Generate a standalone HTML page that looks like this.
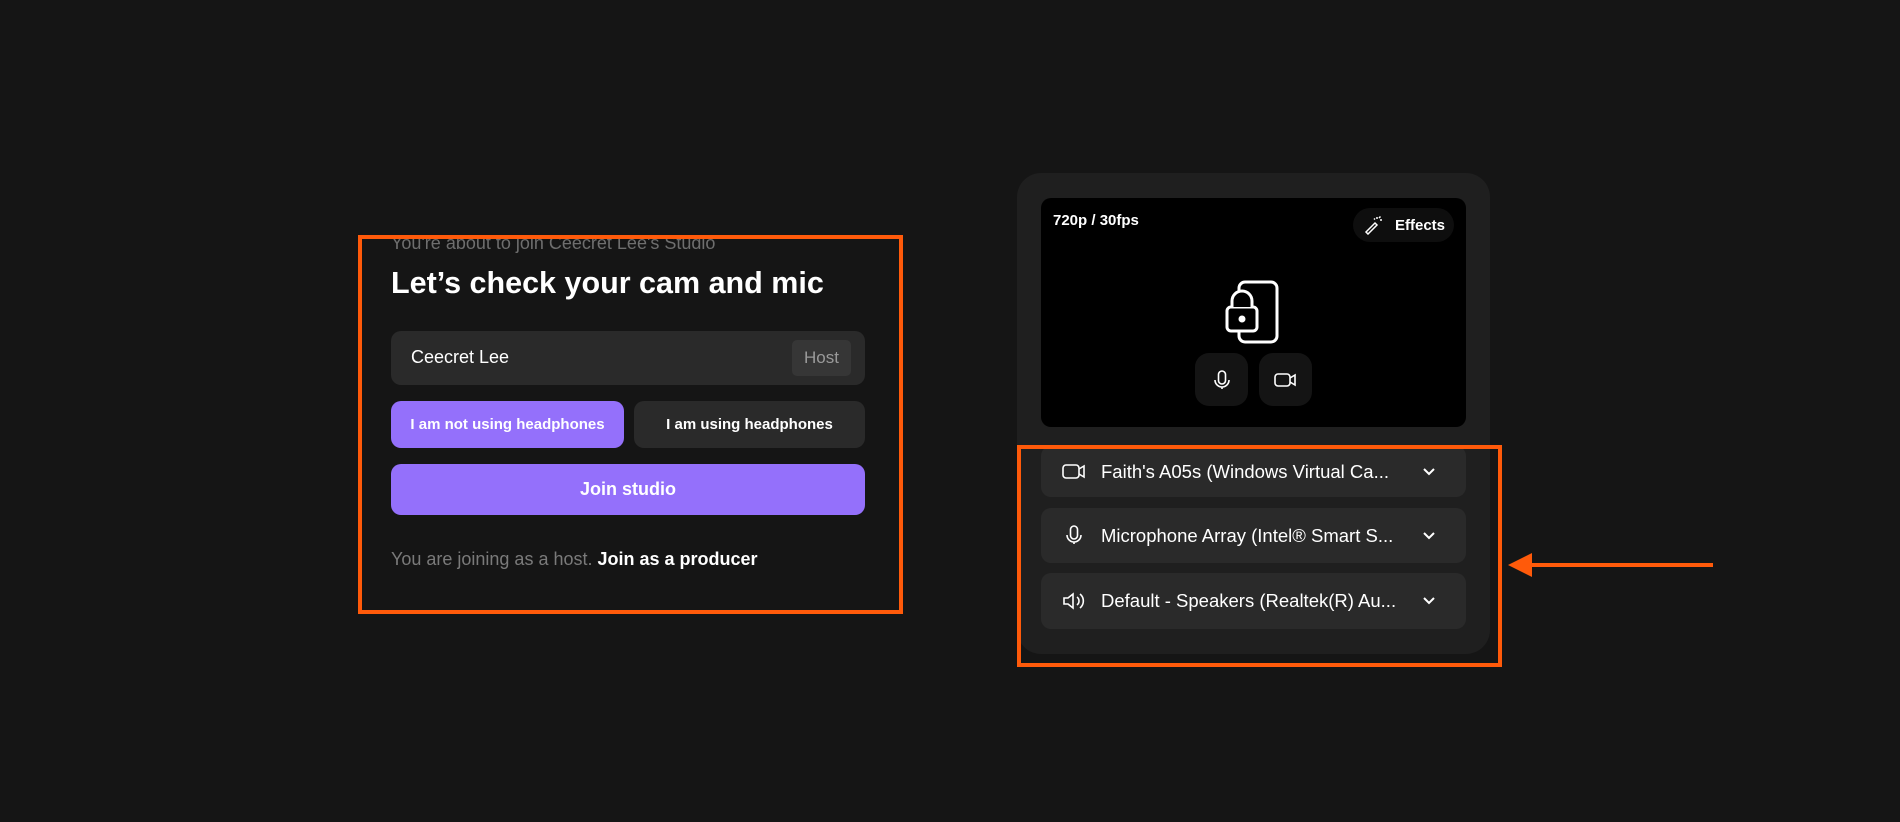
<!DOCTYPE html>
<html><head><meta charset="utf-8"><style>
*{margin:0;padding:0;box-sizing:border-box}
body{width:1900px;height:822px;background:#151515;position:relative;overflow:hidden;font-family:"Liberation Sans",sans-serif;color:#fff}
.a{position:absolute}
.ob{position:absolute;border:4px solid #ff5a0a}
.btn{position:absolute;border-radius:10px;display:flex;align-items:center;justify-content:center;font-size:15px;font-weight:bold}
.row{position:absolute;left:1041px;width:425px;background:#2a2a2a;border-radius:10px;display:flex;align-items:center;font-size:18.5px}
.row .ic{margin-left:20px;margin-right:14px}
.chev{position:absolute;right:30px;top:50%;margin-top:-5px}
</style></head><body>
<div class="a" style="left:391px;top:233px;font-size:18px;color:#6e6e6e">You're about to join Ceecret Lee's Studio</div>
<div class="a" style="left:391px;top:266px;font-size:30.5px;font-weight:bold">Let’s check your cam and mic</div>
<div class="a" style="left:391px;top:331px;width:474px;height:54px;background:#2a2a2a;border-radius:10px"></div>
<div class="a" style="left:411px;top:347px;font-size:18px">Ceecret Lee</div>
<div class="a" style="left:792px;top:340px;width:59px;height:36px;background:#363636;border-radius:5px;color:#9a9a9a;font-size:17px;display:flex;align-items:center;justify-content:center">Host</div>
<div class="btn" style="left:391px;top:401px;width:233px;height:47px;background:#9470fb">I am not using headphones</div>
<div class="btn" style="left:634px;top:401px;width:231px;height:47px;background:#2a2a2a">I am using headphones</div>
<div class="btn" style="left:391px;top:464px;width:474px;height:51px;background:#9470fb;font-size:18px">Join studio</div>
<div class="a" style="left:391px;top:549px;font-size:18px;color:#7a7a7a">You are joining as a host. <span style="color:#fff;font-weight:bold">Join as a producer</span></div>
<div class="ob" style="left:358px;top:235px;width:545px;height:379px;border-width:4px"></div>

<div class="a" style="left:1017px;top:173px;width:473px;height:481px;background:#1f1f1f;border-radius:24px"></div>
<div class="a" style="left:1041px;top:198px;width:425px;height:229px;background:#000;border-radius:10px"></div>
<div class="a" style="left:1053px;top:212px;font-size:15px;font-weight:bold">720p / 30fps</div>
<div class="a" style="left:1353px;top:208px;width:101px;height:34px;background:#0e0e0e;border-radius:17px;display:flex;align-items:center;font-size:15px;font-weight:bold">
<svg width="20" height="20" viewBox="0 0 20 20" style="margin-left:10px;margin-right:12px" fill="none" stroke="#fff" stroke-width="1.5"><path d="M3 17l9-9 2 2-9 9z"/><path d="M14 2v2M17 5h2M16 3l1.5-1.5M12 4.5l-1-1"/></svg>Effects</div>
<svg class="a" style="left:1222px;top:278px" width="64" height="68" viewBox="0 0 64 68" fill="none" stroke="#fff" stroke-width="3"><rect x="17" y="4" width="38" height="60" rx="6"/><rect x="5" y="29" width="30" height="24" rx="4" fill="#000"/><path d="M10 29v-6a10 10 0 0 1 20 0v6" fill="#000"/><circle cx="20" cy="41" r="2" fill="#fff"/></svg>
<div class="a" style="left:1195px;top:353px;width:53px;height:53px;background:#141414;border-radius:14px"></div>
<div class="a" style="left:1259px;top:353px;width:53px;height:53px;background:#141414;border-radius:14px"></div>
<svg class="a" style="left:1210px;top:368px" width="24" height="24" viewBox="0 0 24 24" fill="none" stroke="#fff" stroke-width="1.6"><rect x="8.5" y="3" width="7" height="13" rx="3.5"/><path d="M5 12a7 7 0 0 0 14 0M12 19v2"/></svg>
<svg class="a" style="left:1273px;top:368px" width="26" height="24" viewBox="0 0 26 24" fill="none" stroke="#fff" stroke-width="1.6"><rect x="2" y="6" width="15" height="12" rx="3"/><path d="M17 10l5-3v10l-5-3"/></svg>

<div class="row" style="top:446px;height:51px"><svg class="ic" width="26" height="22" viewBox="0 0 26 22" fill="none" stroke="#fff" stroke-width="1.6"><rect x="2" y="4" width="16" height="13" rx="3"/><path d="M18 8l5-3v11l-5-3"/></svg>Faith's A05s (Windows Virtual Ca...<svg class="chev" width="14" height="10" viewBox="0 0 14 10" fill="none" stroke="#fff" stroke-width="2"><path d="M2 2l5 5 5-5"/></svg></div>
<div class="row" style="top:508px;height:55px"><svg class="ic" width="26" height="24" viewBox="0 0 26 24" fill="none" stroke="#fff" stroke-width="1.6"><rect x="9.5" y="2" width="7" height="13" rx="3.5"/><path d="M6 11a7 7 0 0 0 14 0M13 18v2"/></svg>Microphone Array (Intel® Smart S...<svg class="chev" width="14" height="10" viewBox="0 0 14 10" fill="none" stroke="#fff" stroke-width="2"><path d="M2 2l5 5 5-5"/></svg></div>
<div class="row" style="top:573px;height:56px"><svg class="ic" width="26" height="24" viewBox="0 0 26 24" fill="none" stroke="#fff" stroke-width="1.6"><path d="M3 9h4l5-4v14l-5-4H3z"/><path d="M16 8a5 5 0 0 1 0 8M19 5a9 9 0 0 1 0 14"/></svg>Default - Speakers (Realtek(R) Au...<svg class="chev" width="14" height="10" viewBox="0 0 14 10" fill="none" stroke="#fff" stroke-width="2"><path d="M2 2l5 5 5-5"/></svg></div>
<div class="ob" style="left:1017px;top:445px;width:485px;height:222px"></div>
<svg class="a" style="left:1500px;top:545px" width="220" height="40"><polygon points="8,20 32,8 32,32" fill="#ff5a0a"/><rect x="30" y="18" width="183" height="4" fill="#ff5a0a"/></svg>
</body></html>
